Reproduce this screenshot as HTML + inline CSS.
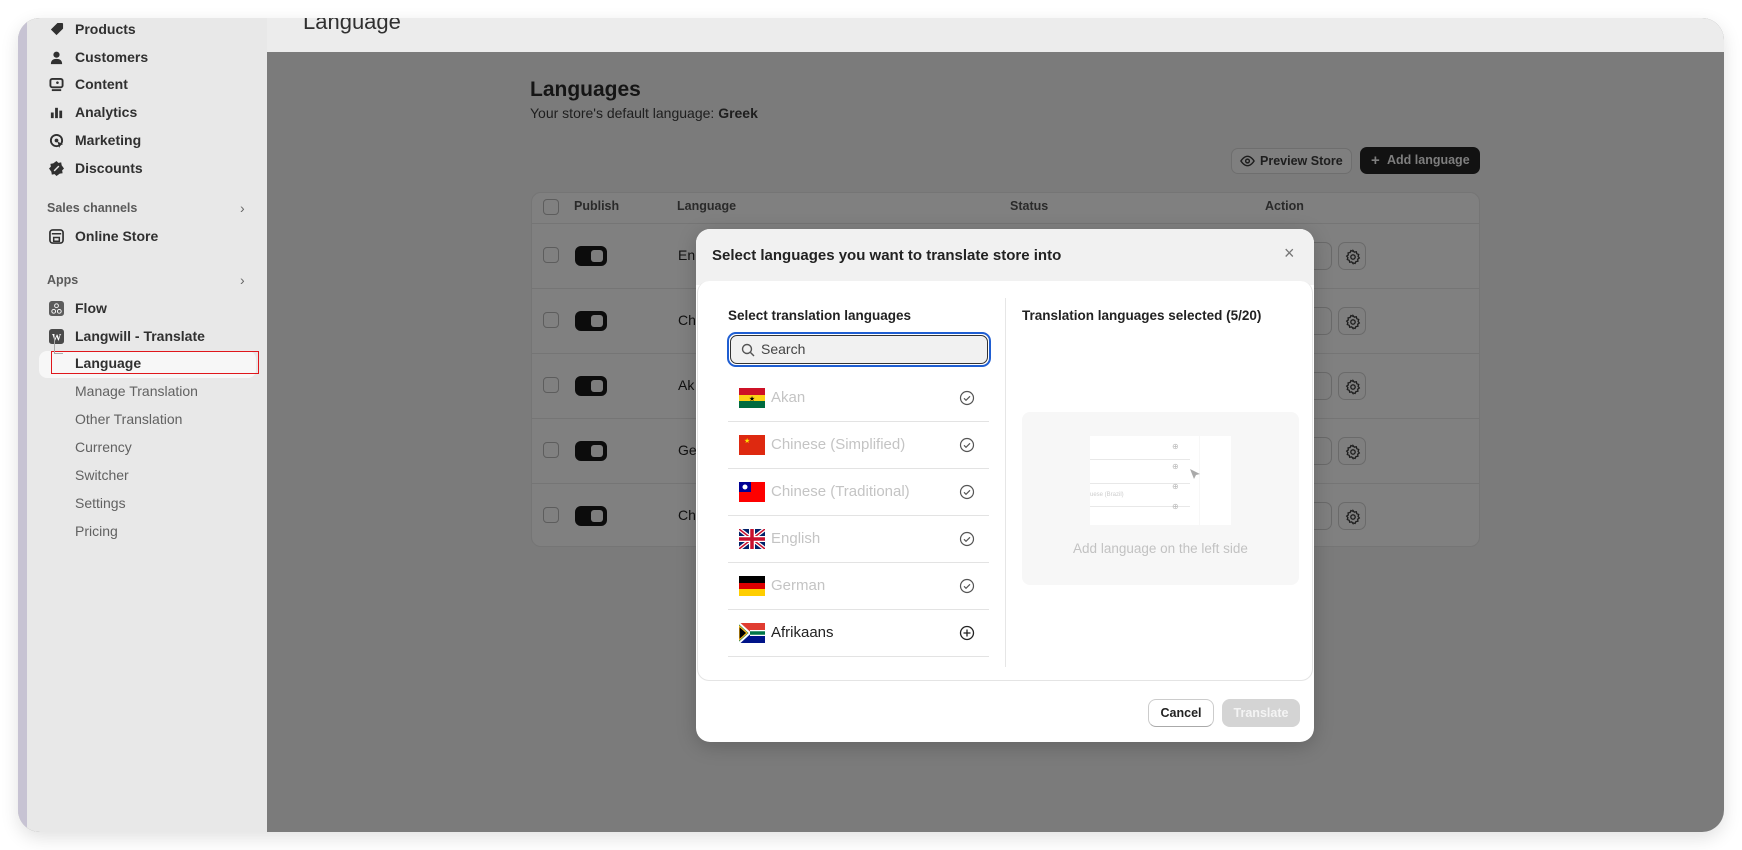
<!DOCTYPE html>
<html><head><meta charset="utf-8">
<style>
*{box-sizing:border-box;margin:0;padding:0}
body{width:1742px;height:850px;background:#fff;font-family:"Liberation Sans",sans-serif;position:relative;overflow:hidden;color:#303030}
.abs{position:absolute}
#win{position:absolute;left:18px;top:18px;width:1706px;height:814px;border-radius:22px;overflow:hidden;background:#7b7b7b;box-shadow:0 6px 18px rgba(0,0,0,.12)}
#side{position:absolute;left:0;top:0;width:249px;height:814px;background:#e8e8e8}
#strip{position:absolute;left:0;top:0;width:9px;height:814px;background:#c7c3d3}
#top{position:absolute;left:249px;top:0;right:0;height:34px;background:#ececec}
.nav{position:absolute;left:57px;font-size:14px;font-weight:bold;color:#303030;white-space:nowrap}
.sub{position:absolute;left:57px;font-size:14px;color:#616161}
.ico{position:absolute;left:31px;width:15px;height:15px}
.sec{position:absolute;left:29px;font-size:12.5px;font-weight:bold;color:#5a5a5a}
.chev{position:absolute;left:222px;font-size:14px;color:#666}
.card{position:absolute;left:513px;top:174px;width:949px;height:355px;background:#808080;border:1px solid #757575;border-radius:10px}
.row{position:absolute;left:0;width:100%;border-top:1px solid #757575}
.cb{position:absolute;width:16px;height:16px;border:1.5px solid #5d5d5d;border-radius:4px}
.tog{position:absolute;width:32px;height:20px;background:#0c0c0c;border-radius:6px}
.tog:after{content:"";position:absolute;right:4px;top:4px;width:12px;height:12px;background:#7d7d7d;border-radius:3px}
.gear{position:absolute;width:28px;height:28px;border:1px solid #6a6a6a;border-radius:7px;background:#7f7f7f}
.gear svg{position:absolute;left:6px;top:6px}
#modal{position:absolute;left:678px;top:211px;width:618px;height:513px;background:#fff;border-radius:14px;overflow:hidden;box-shadow:0 4px 20px rgba(0,0,0,.2)}
.lang{position:absolute;left:32px;width:261px;height:47px;border-bottom:1px solid #e3e3e3}
.lang .fl{position:absolute;left:11px;top:13px;width:26px;height:20px;overflow:hidden}
.lang .t{position:absolute;left:43px;top:14px;font-size:15px;color:#c4c4c4}
.lang svg.c{position:absolute;left:231px;top:15px}
</style></head><body>
<div id="win">
 <div id="side">
  <div id="strip"></div>
  <svg class="ico" style="top:4px" viewBox="0 0 16 16"><path d="M9 1h5a1 1 0 011 1v5L8 14 2 8z" fill="#303030"/></svg>
  <div class="nav" style="top:3px">Products</div>
  <svg class="ico" style="top:32px" viewBox="0 0 16 16"><circle cx="8" cy="5" r="3.3" fill="#303030"/><path d="M2 15c0-4 2.5-5.5 6-5.5s6 1.5 6 5.5z" fill="#303030"/></svg>
  <div class="nav" style="top:31px">Customers</div>
  <svg class="ico" style="top:59px" viewBox="0 0 16 16"><rect x="1.5" y="2" width="13" height="9" rx="2" fill="none" stroke="#303030" stroke-width="2"/><rect x="3" y="13" width="10" height="2" fill="#303030"/><circle cx="9" cy="6" r="1.4" fill="#303030"/></svg>
  <div class="nav" style="top:58px">Content</div>
  <svg class="ico" style="top:87px" viewBox="0 0 16 16"><rect x="2" y="8" width="3" height="6" fill="#303030"/><rect x="6.5" y="3" width="3" height="11" fill="#303030"/><rect x="11" y="6" width="3" height="8" fill="#303030"/></svg>
  <div class="nav" style="top:86px">Analytics</div>
  <svg class="ico" style="top:115px" viewBox="0 0 16 16"><circle cx="8" cy="8" r="6" fill="none" stroke="#303030" stroke-width="2"/><circle cx="8" cy="8" r="2" fill="#303030"/><path d="M9 9l6 3-3 1-1 3z" fill="#303030"/></svg>
  <div class="nav" style="top:114px">Marketing</div>
  <svg class="ico" style="top:143px" viewBox="0 0 16 16"><path d="M8 0l2 2 3-.5.5 3L16 8l-2 2 .5 3-3 .5L8 16l-2-2-3 .5-.5-3L0 8l2-2-.5-3 3-.5z" fill="#303030"/><path d="M5.5 10.5l5-5" stroke="#e8e8e8" stroke-width="1.5"/></svg>
  <div class="nav" style="top:142px">Discounts</div>
  <div class="sec" style="top:183px">Sales channels</div><div class="chev" style="top:182px">›</div>
  <svg class="ico" style="top:211px" viewBox="0 0 16 16"><rect x="1" y="1" width="14" height="14" rx="3" fill="none" stroke="#303030" stroke-width="1.8"/><path d="M3 5h10M5 9h6v4H5z" stroke="#303030" stroke-width="1.6" fill="none"/></svg>
  <div class="nav" style="top:210px">Online Store</div>
  <div class="sec" style="top:255px">Apps</div><div class="chev" style="top:254px">›</div>
  <svg class="ico" style="top:283px" viewBox="0 0 16 16"><rect x="0" y="0" width="16" height="16" rx="3" fill="#5c5c5c"/><circle cx="8" cy="5" r="2" fill="none" stroke="#fff"/><circle cx="5" cy="11" r="2" fill="none" stroke="#fff"/><circle cx="11" cy="11" r="2" fill="none" stroke="#fff"/></svg>
  <div class="nav" style="top:282px">Flow</div>
  <svg class="ico" style="top:311px" viewBox="0 0 16 16"><rect x="0" y="0" width="16" height="16" rx="3" fill="#4a4a4a"/><text x="8" y="12" font-size="10" font-weight="bold" fill="#fff" text-anchor="middle" font-family="Liberation Serif">W</text></svg>
  <div class="nav" style="top:310px">Langwill - Translate</div>
  <div class="abs" style="left:21px;top:333px;width:217px;height:27px;background:#f7f7f7;border-radius:8px"></div>
  <div class="abs" style="left:33px;top:333px;width:208px;height:23px;border:1.5px solid #e0161b"></div>
  <div class="abs" style="left:36px;top:318px;width:9px;height:18px;border-left:1px solid #aaa;border-bottom:1px solid #aaa"></div>
  <div class="nav" style="top:337px">Language</div>
  <div class="sub" style="top:365px">Manage Translation</div>
  <div class="sub" style="top:393px">Other Translation</div>
  <div class="sub" style="top:421px">Currency</div>
  <div class="sub" style="top:449px">Switcher</div>
  <div class="sub" style="top:477px">Settings</div>
  <div class="sub" style="top:505px">Pricing</div>
 </div>
 <div id="top"><div class="abs" style="left:36px;top:-9px;font-size:22px;color:#303030">Language</div></div>
 <div class="abs" style="left:512px;top:60px;font-size:21px;font-weight:bold;color:#151515">Languages</div>
 <div class="abs" style="left:512px;top:87px;font-size:14px;color:#1e1e1e">Your store's default language: <b>Greek</b></div>
 <div class="abs" style="left:1213px;top:130px;width:121px;height:26px;border:1px solid #6e6e6e;border-radius:7px;background:#7f7f7f;font-size:12.5px;font-weight:bold;color:#1e1e1e;line-height:24px;padding-left:28px">Preview Store
  <svg class="abs" style="left:8px;top:6px" width="15" height="12" viewBox="0 0 16 12"><path d="M1 6s3-5 7-5 7 5 7 5-3 5-7 5-7-5-7-5z" fill="none" stroke="#1e1e1e" stroke-width="1.5"/><circle cx="8" cy="6" r="2" fill="none" stroke="#1e1e1e" stroke-width="1.5"/></svg></div>
 <div class="abs" style="left:1342px;top:129px;width:120px;height:27px;background:#121212;border-radius:7px;font-size:12.5px;font-weight:bold;color:#7e7e7e;line-height:27px;padding-left:27px"><span class="abs" style="left:11px;top:0;font-size:15px">+</span>Add language</div>
 <div class="card">
  <div class="cb" style="left:11px;top:6px"></div>
  <div class="abs" style="left:42px;top:6px;font-size:12.5px;font-weight:bold;color:#2a2a2a">Publish</div>
  <div class="abs" style="left:145px;top:6px;font-size:12.5px;font-weight:bold;color:#2a2a2a">Language</div>
  <div class="abs" style="left:478px;top:6px;font-size:12.5px;font-weight:bold;color:#2a2a2a">Status</div>
  <div class="abs" style="left:733px;top:6px;font-size:12.5px;font-weight:bold;color:#2a2a2a">Action</div>
  <div class="row" style="top:30px;height:65px"><div class="cb" style="left:11px;top:23px"></div><div class="tog" style="left:43px;top:22px"></div><div class="abs" style="left:146px;top:23px;font-size:14px;color:#111">En</div><div class="gear" style="left:772px;top:18px"></div><div class="gear" style="left:806px;top:18px"><svg width="16" height="16" viewBox="0 0 16 16"><path d="M8 1.5l1.3 1.6 2-.4.5 2 1.9.8-.6 1.9 1.2 1.6-1.6 1.2.2 2-2 .4-.8 1.9-1.9-.6L8 14.5l-1.3-1.6-2 .4-.5-2-1.9-.8.6-1.9L1.7 7.1l1.6-1.2-.2-2 2-.4.8-1.9 1.9.6z" fill="none" stroke="#1e1e1e" stroke-width="1.3"/><circle cx="8" cy="8" r="2.2" fill="none" stroke="#1e1e1e" stroke-width="1.3"/></svg></div></div>
  <div class="row" style="top:95px;height:65px"><div class="cb" style="left:11px;top:23px"></div><div class="tog" style="left:43px;top:22px"></div><div class="abs" style="left:146px;top:23px;font-size:14px;color:#111">Ch</div><div class="gear" style="left:772px;top:18px"></div><div class="gear" style="left:806px;top:18px"><svg width="16" height="16" viewBox="0 0 16 16"><path d="M8 1.5l1.3 1.6 2-.4.5 2 1.9.8-.6 1.9 1.2 1.6-1.6 1.2.2 2-2 .4-.8 1.9-1.9-.6L8 14.5l-1.3-1.6-2 .4-.5-2-1.9-.8.6-1.9L1.7 7.1l1.6-1.2-.2-2 2-.4.8-1.9 1.9.6z" fill="none" stroke="#1e1e1e" stroke-width="1.3"/><circle cx="8" cy="8" r="2.2" fill="none" stroke="#1e1e1e" stroke-width="1.3"/></svg></div></div>
  <div class="row" style="top:160px;height:65px"><div class="cb" style="left:11px;top:23px"></div><div class="tog" style="left:43px;top:22px"></div><div class="abs" style="left:146px;top:23px;font-size:14px;color:#111">Ak</div><div class="gear" style="left:772px;top:18px"></div><div class="gear" style="left:806px;top:18px"><svg width="16" height="16" viewBox="0 0 16 16"><path d="M8 1.5l1.3 1.6 2-.4.5 2 1.9.8-.6 1.9 1.2 1.6-1.6 1.2.2 2-2 .4-.8 1.9-1.9-.6L8 14.5l-1.3-1.6-2 .4-.5-2-1.9-.8.6-1.9L1.7 7.1l1.6-1.2-.2-2 2-.4.8-1.9 1.9.6z" fill="none" stroke="#1e1e1e" stroke-width="1.3"/><circle cx="8" cy="8" r="2.2" fill="none" stroke="#1e1e1e" stroke-width="1.3"/></svg></div></div>
  <div class="row" style="top:225px;height:65px"><div class="cb" style="left:11px;top:23px"></div><div class="tog" style="left:43px;top:22px"></div><div class="abs" style="left:146px;top:23px;font-size:14px;color:#111">Ge</div><div class="gear" style="left:772px;top:18px"></div><div class="gear" style="left:806px;top:18px"><svg width="16" height="16" viewBox="0 0 16 16"><path d="M8 1.5l1.3 1.6 2-.4.5 2 1.9.8-.6 1.9 1.2 1.6-1.6 1.2.2 2-2 .4-.8 1.9-1.9-.6L8 14.5l-1.3-1.6-2 .4-.5-2-1.9-.8.6-1.9L1.7 7.1l1.6-1.2-.2-2 2-.4.8-1.9 1.9.6z" fill="none" stroke="#1e1e1e" stroke-width="1.3"/><circle cx="8" cy="8" r="2.2" fill="none" stroke="#1e1e1e" stroke-width="1.3"/></svg></div></div>
  <div class="row" style="top:290px;height:65px"><div class="cb" style="left:11px;top:23px"></div><div class="tog" style="left:43px;top:22px"></div><div class="abs" style="left:146px;top:23px;font-size:14px;color:#111">Ch</div><div class="gear" style="left:772px;top:18px"></div><div class="gear" style="left:806px;top:18px"><svg width="16" height="16" viewBox="0 0 16 16"><path d="M8 1.5l1.3 1.6 2-.4.5 2 1.9.8-.6 1.9 1.2 1.6-1.6 1.2.2 2-2 .4-.8 1.9-1.9-.6L8 14.5l-1.3-1.6-2 .4-.5-2-1.9-.8.6-1.9L1.7 7.1l1.6-1.2-.2-2 2-.4.8-1.9 1.9.6z" fill="none" stroke="#1e1e1e" stroke-width="1.3"/><circle cx="8" cy="8" r="2.2" fill="none" stroke="#1e1e1e" stroke-width="1.3"/></svg></div></div>
 </div>
 <div id="modal">
  <div class="abs" style="left:0;top:0;width:618px;height:56px;background:#f1f1f1"></div>
  <div class="abs" style="left:16px;top:18px;font-size:15px;font-weight:bold;color:#222">Select languages you want to translate store into</div>
  <div class="abs" style="left:588px;top:14px;font-size:18px;color:#777">×</div>
  <div class="abs" style="left:1px;top:52px;width:616px;height:400px;background:#fff;border-radius:12px;border:1px solid #e4e4e4;border-top:none"></div>
  <div class="abs" style="left:32px;top:79px;font-size:13.5px;font-weight:bold;color:#222">Select translation languages</div>
  <div class="abs" style="left:31px;top:103px;width:264px;height:35px;border:2px solid #1f5ed2;border-radius:9px;padding:1px">
   <div style="width:100%;height:100%;border:1px solid #333;border-radius:7px;background:#f1f1f1;font-size:14px;color:#444;line-height:27px;padding-left:30px;position:relative">Search
    <svg class="abs" style="left:10px;top:7px" width="14" height="14" viewBox="0 0 14 14"><circle cx="6" cy="6" r="4.5" fill="none" stroke="#555" stroke-width="1.4"/><path d="M9.5 9.5L13 13" stroke="#555" stroke-width="1.4"/></svg></div></div>
  <div class="lang" style="top:146px"><div class="fl"><svg width="26" height="20"><rect width="26" height="7" fill="#ce1126"/><rect y="7" width="26" height="7" fill="#fcd116"/><rect y="13" width="26" height="7" fill="#006b3f"/><text x="13" y="13" font-size="7" text-anchor="middle">★</text></svg></div><div class="t">Akan</div><svg class="c" width="16" height="16"><circle cx="8" cy="8" r="6.5" fill="none" stroke="#555" stroke-width="1.2"/><path d="M5 8.3l2 2 4-4" fill="none" stroke="#555" stroke-width="1.2"/></svg></div>
  <div class="lang" style="top:193px"><div class="fl"><svg width="26" height="20"><rect width="26" height="20" fill="#de2910"/><text x="5" y="8" font-size="7" fill="#ffde00">★</text></svg></div><div class="t">Chinese (Simplified)</div><svg class="c" width="16" height="16"><circle cx="8" cy="8" r="6.5" fill="none" stroke="#555" stroke-width="1.2"/><path d="M5 8.3l2 2 4-4" fill="none" stroke="#555" stroke-width="1.2"/></svg></div>
  <div class="lang" style="top:240px"><div class="fl"><svg width="26" height="20"><rect width="26" height="20" fill="#fe0000"/><rect width="12" height="10" fill="#000095"/><circle cx="6" cy="5" r="2.5" fill="#fff"/></svg></div><div class="t">Chinese (Traditional)</div><svg class="c" width="16" height="16"><circle cx="8" cy="8" r="6.5" fill="none" stroke="#555" stroke-width="1.2"/><path d="M5 8.3l2 2 4-4" fill="none" stroke="#555" stroke-width="1.2"/></svg></div>
  <div class="lang" style="top:287px"><div class="fl"><svg width="26" height="20"><rect width="26" height="20" fill="#012169"/><path d="M0 0L26 20M26 0L0 20" stroke="#fff" stroke-width="4"/><path d="M0 0L26 20M26 0L0 20" stroke="#c8102e" stroke-width="1.5"/><path d="M13 0v20M0 10h26" stroke="#fff" stroke-width="6"/><path d="M13 0v20M0 10h26" stroke="#c8102e" stroke-width="3.5"/></svg></div><div class="t">English</div><svg class="c" width="16" height="16"><circle cx="8" cy="8" r="6.5" fill="none" stroke="#555" stroke-width="1.2"/><path d="M5 8.3l2 2 4-4" fill="none" stroke="#555" stroke-width="1.2"/></svg></div>
  <div class="lang" style="top:334px"><div class="fl"><svg width="26" height="20"><rect width="26" height="7" fill="#000"/><rect y="7" width="26" height="7" fill="#dd0000"/><rect y="13" width="26" height="7" fill="#ffce00"/></svg></div><div class="t">German</div><svg class="c" width="16" height="16"><circle cx="8" cy="8" r="6.5" fill="none" stroke="#555" stroke-width="1.2"/><path d="M5 8.3l2 2 4-4" fill="none" stroke="#555" stroke-width="1.2"/></svg></div>
  <div class="lang" style="top:381px"><div class="fl"><svg width="26" height="20"><rect width="26" height="10" fill="#e03c31"/><rect y="10" width="26" height="10" fill="#001489"/><path d="M0 0L11 10L0 20" fill="#007749" stroke="#fff" stroke-width="2"/><path d="M11 10H26" stroke="#fff" stroke-width="6"/><path d="M11 10H26" stroke="#007749" stroke-width="3.5"/><path d="M0 3L8 10L0 17z" fill="#000" stroke="#ffb81c" stroke-width="1.2"/></svg></div><div class="t" style="color:#222">Afrikaans</div><svg class="c" width="16" height="16"><circle cx="8" cy="8" r="6.5" fill="none" stroke="#222" stroke-width="1.3"/><path d="M8 4.5v7M4.5 8h7" stroke="#222" stroke-width="1.3"/></svg></div>
  <div class="abs" style="left:309px;top:69px;width:1px;height:369px;background:#e6e6e6"></div>
  <div class="abs" style="left:326px;top:79px;font-size:13.5px;font-weight:bold;color:#222">Translation languages selected (5/20)</div>
  <div class="abs" style="left:326px;top:183px;width:277px;height:173px;background:#f7f7f7;border-radius:8px">
   <div class="abs" style="left:68px;top:24px;width:109px;height:89px;background:#fff"></div>
   <div class="abs" style="left:178px;top:24px;width:31px;height:89px;background:#fff"></div>
   <div class="abs" style="left:68px;top:47px;width:100px;height:1px;background:#e8e8e8"></div>
   <div class="abs" style="left:68px;top:71px;width:100px;height:1px;background:#e8e8e8"></div>
   <div class="abs" style="left:68px;top:94px;width:100px;height:1px;background:#e8e8e8"></div>
   <div class="abs" style="left:68px;top:80px;font-size:6px;color:#ccc">uese (Brazil)</div>
   <div class="abs" style="left:150px;top:30px;font-size:8px;color:#bbb;line-height:10px">⊕<br><br>⊕<br><br>⊕<br><br>⊕</div>
   <svg class="abs" style="left:162px;top:52px" width="18" height="18"><path d="M6 5l10 5-4 1-2 4z" fill="#aaa"/></svg>
   <div class="abs" style="left:0;width:100%;top:129px;text-align:center;font-size:13.5px;color:#c2c2c2">Add language on the left side</div>
  </div>
  <div class="abs" style="left:452px;top:470px;width:66px;height:28px;border:1px solid #ccc;border-bottom-color:#aaa;border-radius:8px;font-size:12.5px;font-weight:bold;color:#222;text-align:center;line-height:26px">Cancel</div>
  <div class="abs" style="left:526px;top:470px;width:78px;height:28px;background:#d4d4d4;border-radius:8px;font-size:12.5px;font-weight:bold;color:#f4f4f4;text-align:center;line-height:28px">Translate</div>
 </div>
</div>
</body></html>
